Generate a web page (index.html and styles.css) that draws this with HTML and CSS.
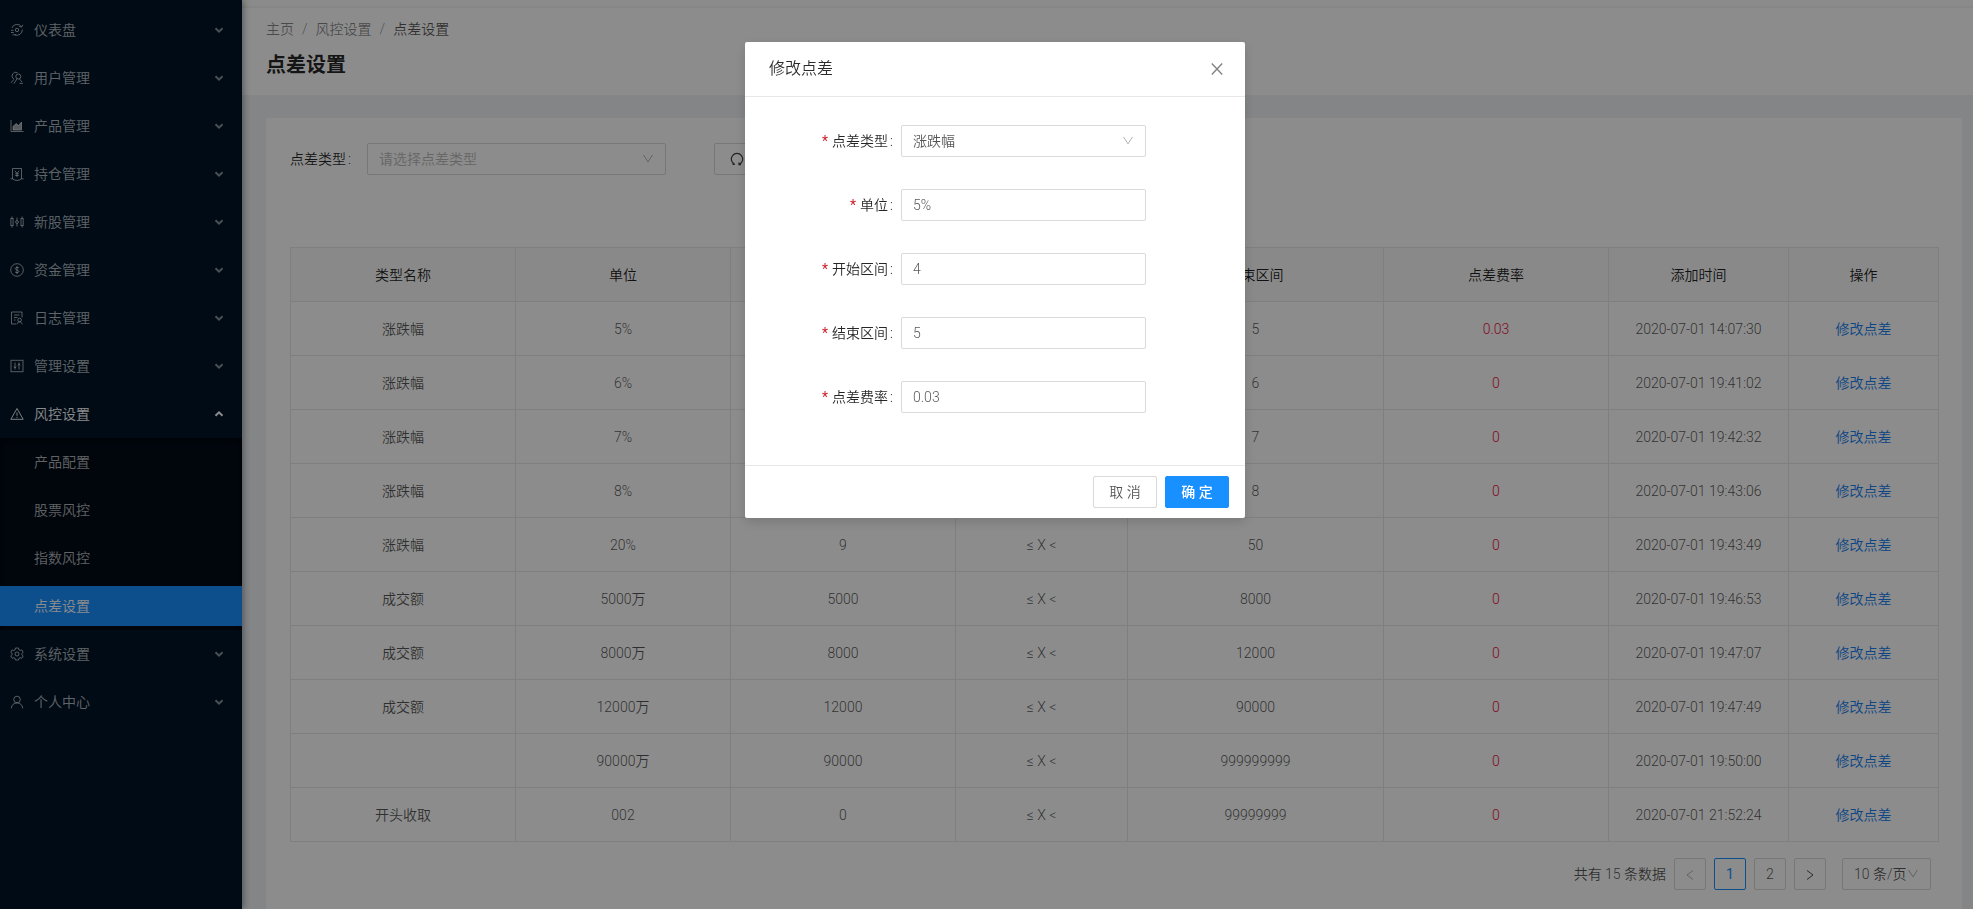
FILE: index.html
```html
<!DOCTYPE html>
<html lang="zh-CN">
<head>
<meta charset="utf-8">
<title>点差设置</title>
<link rel="stylesheet" href="styles.css">
</head>
<body>
<svg class="sprite" aria-hidden="true">
  <symbol id="chevron" viewBox="0 0 10 10"><path d="M1.500 3.200 5 6.700 8.500 3.200" fill="none" stroke="currentColor" stroke-width="2"/></symbol>
  <symbol id="down" viewBox="0 0 12 12"><path d="M1.500 2 6 8.800 10.500 2" fill="none" stroke="currentColor" stroke-width="1"/></symbol>
</svg>
<div class="layout">
  <nav class="sider">
    <ul class="menu" id="menu-top"></ul>
  </nav>
  <div class="main">
    <header class="page-header">
      <ol class="breadcrumb">
        <li><a href="#">主页</a></li>
        <li><a href="#">风控设置</a></li>
        <li class="current">点差设置</li>
      </ol>
      <h1>点差设置</h1>
    </header>
    <main class="card">
      <form class="filters">
        <label for="filter-type">点差类型<span class="colon">:</span></label>
        <div class="select filter-select">
          <select id="filter-type" class="placeholder"><option>请选择点差类型</option><option>涨跌幅</option><option>成交额</option></select>
          <svg class="arrow"><use href="#down"/></svg>
        </div>
        <button type="reset" class="btn reset"><svg viewBox="0 0 14 14" width="14" height="14" fill="none" stroke="currentColor" stroke-width="1.200"><path d="M2.500 12.300H4.800M4.600 12.300A5.700 5.700 0 1 1 9.400 12.300M9 10.500V12.700H11"/></svg>重置</button>
      </form>
      <table class="grid">
        <colgroup><col class="c1"><col class="c2"><col class="c3"><col class="c4"><col class="c5"><col class="c6"><col class="c7"><col class="c8"></colgroup>
        <thead><tr><th>类型名称</th><th>单位</th><th>开始区间</th><th></th><th>结束区间</th><th>点差费率</th><th>添加时间</th><th>操作</th></tr></thead>
        <tbody id="rows"></tbody>
      </table>
      <div class="pager">
        <span class="total">共有 15 条数据</span>
        <button class="page prev" disabled aria-label="上一页"><svg viewBox="0 0 12 12"><path d="M9 1.500 3 6 9 10.500"/></svg></button>
        <button class="page active">1</button>
        <button class="page">2</button>
        <button class="page" aria-label="下一页"><svg viewBox="0 0 12 12"><path d="M3 1.500 9 6 3 10.500"/></svg></button>
        <div class="select size-select">
          <select aria-label="每页条数"><option>10 条/页</option><option>20 条/页</option></select>
          <svg class="arrow"><use href="#down"/></svg>
        </div>
      </div>
    </main>
  </div>
</div>
<div class="mask">
  <form class="modal" role="dialog" aria-labelledby="modal-title">
    <div class="modal-head">
      <h2 id="modal-title">修改点差</h2>
      <button type="button" class="close" aria-label="关闭"><svg viewBox="0 0 12 12" width="12" height="12"><path d="M.8.500 11.200 11.500M11.200.500.8 11.500" fill="none" stroke="currentColor" stroke-width="1.300"/></svg></button>
    </div>
    <div class="modal-body">
      <div class="field"><label for="f-type">点差类型</label>
        <div class="select"><select id="f-type"><option>涨跌幅</option><option>成交额</option></select><svg class="arrow"><use href="#down"/></svg></div></div>
      <div class="field"><label for="f-unit">单位</label><input id="f-unit" value="5%"></div>
      <div class="field"><label for="f-start">开始区间</label><input id="f-start" value="4"></div>
      <div class="field"><label for="f-end">结束区间</label><input id="f-end" value="5"></div>
      <div class="field"><label for="f-rate">点差费率</label><input id="f-rate" value="0.03"></div>
    </div>
    <div class="modal-foot">
      <button type="button" class="btn">取 消</button>
      <button type="button" class="btn primary">确 定</button>
    </div>
  </form>
</div>
<script src="app.js"></script>
</body>
</html>
```
FILE: app.js
```js
const icons = {
  dash: '<circle cx="7" cy="7" r="1.700"/><path d="M1.800 5A5.500 5.500 0 0 1 11.500 3.800M12.800 1.800 11.600 4.100 9.200 3.500M12.300 6.500A5.500 5.500 0 0 1 5 12M1 7.300H3.500M1 9.500H3.800M2.500 11.800H6"/>',
  users: '<circle cx="8.300" cy="5.500" r="2.500"/><path d="M7 7.800 3.800 12.800M4 8.300 1 11.800M3.800 8A3.600 3.600 0 1 1 7.500 1.800M9.500 12.300H13M9.500 8 12 11"/>',
  area: '<path d="M1 1V12.500H13.500"/><path d="M3 11V7.500L6 4.500 8.500 6.500 11.500 3V11Z" fill="currentColor"/>',
  hold: '<path d="M2.500 12V1.500H11.500V12M.5 11.800H2.500A7 7 0 0 0 11.500 11.800H13.500M5 3.800 7 6.500 9 3.800M7 6.500V10M5.200 6.800H8.800M5.200 8.500H8.800"/>',
  stock: '<rect x=".9" y="3.500" width="2.200" height="7"/><circle cx="7" cy="7" r="1.400"/><rect x="11" y="3.500" width="2.200" height="7"/><path d="M2 1.500V3.500M2 10.500V12.500M7 2.500V5.600M7 8.400V11.500M12.100 1.500V3.500M12.100 10.500V12.500"/>',
  money: '<circle cx="7" cy="7" r="6.300"/><path d="M9 5.200C8.700 4.200 5.200 4.100 5.200 5.600S9 7 9 8.500 5.400 9.900 5 8.700M7 3V11"/>',
  log: '<path d="M6 13H1.500V1H12V6.500M4 4H9.500M4 6.500H7.500M4 9H5.500M7 13.300C7.200 11.300 8.500 10.900 9.500 10.900S12 11.500 12.200 13.300"/><circle cx="9.600" cy="9" r="1.800"/>',
  control: '<rect x="1" y="1.300" width="12" height="11.400"/><path d="M5 3.500V10.500M9 3.500V10.500M3.800 7.500 5 9 6.200 7.500M7.800 6.300 9 4.800 10.200 6.300"/>',
  warn: '<path d="M7 1.500 13.200 12.300H.8ZM7 5.500V8.800M7 9.800V10.900"/>',
  gear: '<circle cx="7" cy="7" r="2"/><path d="M5.500 1H8.500L8.900 2.800 10.200 3.500 11.800 2.900 13.200 5.300 11.900 6.500V7.800L13.200 8.900 11.800 11.300 10.100 10.700 8.900 11.400 8.500 13H5.500L5.100 11.400 3.900 10.700 2.200 11.300.8 8.900 2.100 7.700V6.400L.8 5.300 2.200 2.900 3.800 3.500 5.100 2.800Z"/>',
  user: '<circle cx="7" cy="4.500" r="3.300"/><path d="M1.300 13.300C1.500 9.800 4 7.900 7 7.900S12.500 9.800 12.700 13.300"/>'
};

const menu = [
  ['dash', '仪表盘'], ['users', '用户管理'], ['area', '产品管理'], ['hold', '持仓管理'],
  ['stock', '新股管理'], ['money', '资金管理'], ['log', '日志管理'], ['control', '管理设置'],
  ['warn', '风控设置', ['产品配置', '股票风控', '指数风控', '点差设置']],
  ['gear', '系统设置'], ['user', '个人中心']
];

document.getElementById('menu-top').innerHTML = menu.map(([icon, name, children]) => `
  <li class="${children ? 'open' : ''}">
    <button class="item" aria-expanded="${!!children}">
      <svg class="icon" viewBox="0 0 14 14">${icons[icon]}</svg><span>${name}</span>
      <svg class="caret"><use href="#chevron"/></svg>
    </button>
    ${children ? `<ul class="sub">${children.map(c => `<li><a href="#" class="item${c === '点差设置' ? ' selected' : ''}">${c}</a></li>`).join('')}</ul>` : ''}
  </li>`).join('');

const rows = [
  ['涨跌幅', '5%', '4', '5', '0.03', '14:07:30'],
  ['涨跌幅', '6%', '5', '6', '0', '19:41:02'],
  ['涨跌幅', '7%', '6', '7', '0', '19:42:32'],
  ['涨跌幅', '8%', '7', '8', '0', '19:43:06'],
  ['涨跌幅', '20%', '9', '50', '0', '19:43:49'],
  ['成交额', '5000万', '5000', '8000', '0', '19:46:53'],
  ['成交额', '8000万', '8000', '12000', '0', '19:47:07'],
  ['成交额', '12000万', '12000', '90000', '0', '19:47:49'],
  ['', '90000万', '90000', '999999999', '0', '19:50:00'],
  ['开头收取', '002', '0', '99999999', '0', '21:52:24']
];

document.getElementById('rows').innerHTML = rows.map(([type, unit, from, to, rate, time]) => `
  <tr><td>${type}</td><td>${unit}</td><td>${from}</td><td>≤ X &lt;</td><td>${to}</td>
  <td class="rate">${rate}</td><td>2020-07-01 ${time}</td><td><a href="#">修改点差</a></td></tr>`).join('');
```
FILE: styles.css
```css
* { box-sizing: border-box; }
body {
  margin: 0;
  font: 14px/22px Roboto, "Noto Sans CJK SC", sans-serif;
  font-weight: 350;
  color: rgba(0, 0, 0, .68);
  background: #f0f2f5;
}
button, input, select { font: inherit; color: inherit; }
button { cursor: pointer; }
a { color: #1680f0; text-decoration: none; }
ul, ol { list-style: none; margin: 0; padding: 0; }
h1, h2 { margin: 0; }
.sprite { position: absolute; width: 0; height: 0; }

.layout { display: flex; min-height: 100vh; }
.sider {
  position: relative;
  flex: none;
  width: 242px;
  background: #001529;
  box-shadow: 2px 0 6px rgba(0, 21, 41, .35);
}
.menu { padding-top: 6px; }
.menu > li { padding: 4px 0; }
.item {
  display: flex;
  align-items: center;
  width: 100%;
  height: 40px;
  padding: 0 18px 0 10px;
  border: 0;
  background: none;
  color: rgba(255, 255, 255, .7);
  text-align: left;
}
.icon { width: 14px; height: 14px; margin-right: 10px; fill: none; stroke: currentColor; stroke-width: 1; opacity: .9; }
.caret { width: 10px; height: 10px; margin-left: auto; opacity: .75; }
.menu > .open { padding-bottom: 0; }
.open .item { color: #fff; }
.open .caret { transform: rotate(180deg); opacity: 1; }
.sub { margin-top: 4px; background: #000c17; box-shadow: inset 0 2px 8px rgba(0, 0, 0, .45); }
.sub li { padding: 4px 0; }
.sub .item { padding-left: 34px; color: rgba(255, 255, 255, .7); }
.sub .selected { background: #1890ff; color: #fff; }

.main { flex: 1; min-width: 0; border-top: 6px solid #fbfefb; }
.page-header {
  height: 89px;
  padding: 10px 24px 0;
  border-top: 2px solid #f3f5f2;
  background: #fff;
}
.breadcrumb { display: flex; }
.breadcrumb a { color: rgba(0, 0, 0, .47); }
.breadcrumb li + li::before { content: "/"; margin: 0 8px; color: rgba(0, 0, 0, .47); }
h1 { margin-top: 9px; font-size: 20px; line-height: 32px; font-weight: 700; color: rgba(0, 0, 0, .85); }

.card { margin: 23px 11px 0 24px; padding: 24px 24px 19px; background: #fff; }
.filters { display: flex; align-items: center; height: 33px; color: rgba(0, 0, 0, .85); }
.filters label { width: 77px; white-space: nowrap; }
.colon { margin-left: 2px; }
.select { position: relative; }
select {
  appearance: none;
  width: 100%;
  height: 32px;
  padding: 0 11px;
  border: 1px solid #d9d9d9;
  border-radius: 2px;
  background: #fff;
}
.placeholder { color: #b9b9b9; }
.arrow { position: absolute; right: 12px; top: 10px; width: 12px; height: 12px; color: rgba(0, 0, 0, .3); pointer-events: none; }
.filter-select { width: 299px; margin-right: 48px; }
.btn {
  height: 32px;
  padding: 0 15px;
  border: 1px solid #d9d9d9;
  border-radius: 2px;
  background: #fff;
}
.reset { display: flex; align-items: center; gap: 8px; color: rgba(0, 0, 0, .75); }

.grid {
  width: 100%;
  margin-top: 72px;
  table-layout: fixed;
  border-collapse: collapse;
  text-align: center;
}
.grid th, .grid td { height: 54px; padding: 0; border: 1px solid #e8e8e8; }
.grid th { background: #fafafa; color: rgba(0, 0, 0, .9); font-weight: inherit; }
.c1, .c3, .c6 { width: 225px; }
.c2 { width: 215px; }
.c4 { width: 172px; }
.c5 { width: 256px; }
.c7 { width: 180px; }
.c8 { width: 150px; }
.rate { color: #ee1040; }

.pager { display: flex; justify-content: flex-end; align-items: center; gap: 8px; margin: 16px 7px 0 0; }
.page {
  width: 32px;
  height: 32px;
  padding: 0;
  border: 1px solid #d9d9d9;
  border-radius: 2px;
  background: #fff;
}
.page svg { width: 12px; height: 12px; vertical-align: middle; fill: none; stroke: currentColor; }
.page.active { border-color: #1890ff; color: #1890ff; font-weight: 400; }
.prev { color: rgba(0, 0, 0, .3); }
.size-select { width: 89px; margin-left: 8px; }

.mask {
  position: fixed;
  inset: 0;
  padding: 42px 0 0 17px;
  background: rgba(0, 0, 0, .45);
}
.modal {
  width: 500px;
  margin: 0 auto;
  border-radius: 2px;
  background: #fff;
  box-shadow: 0 4px 12px rgba(0, 0, 0, .15);
}
.modal-head { display: flex; justify-content: space-between; align-items: center; height: 55px; padding: 0 22px 0 24px; border-bottom: 1px solid #e8e8e8; }
h2 { font-size: 16px; line-height: 22px; font-weight: inherit; color: rgba(0, 0, 0, .83); }
.close { display: flex; padding: 0; border: 0; background: none; color: rgba(0, 0, 0, .5); }
.modal-body { display: grid; gap: 32px; padding: 28px 99px 52px 24px; }
.field { display: flex; align-items: center; height: 32px; }
.field label { flex: 1; padding-right: 8px; text-align: right; color: rgba(0, 0, 0, .85); }
.field label::before { content: "*"; margin-right: 4px; color: #cc1c28; font-weight: 400; }
.field label::after { content: ":"; margin-left: 2px; }
.field input, .field .select { width: 245px; height: 32px; }
.field input { padding: 0 11px; border: 1px solid #d9d9d9; border-radius: 2px; }
.modal-foot { display: flex; justify-content: flex-end; gap: 8px; padding: 10px 16px; border-top: 1px solid #e8e8e8; }
.modal-foot .btn { width: 64px; }
.modal-foot .primary { border-color: #1890ff; background: #1890ff; color: #fff; font-weight: 500; }
```
